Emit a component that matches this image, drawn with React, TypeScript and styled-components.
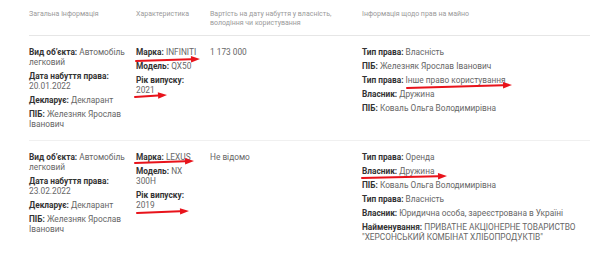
import styled, { createGlobalStyle } from 'styled-components';

const Global = createGlobalStyle`
  html, body { margin: 0; padding: 0; background: #fff; }
  body { font-family: Roboto, "Liberation Sans", sans-serif; }
`;

const Page = styled.div`
  position: relative;
  width: 600px;
  height: 257px;
  overflow: hidden;
  padding: 10px 10px 0 29px;
  box-sizing: border-box;
`;

const Grid = styled.div`
  display: grid;
  grid-template-columns: 107px 74px 152px 228px;
`;

const Head = styled.div`
  font-size: 7px;
  line-height: 9px;
  color: #9a9a9a;
  padding: 0 12px 7px 0;
  border-bottom: 1px solid #e6e6e6;
`;

const Cell = styled.div<{ $last?: boolean; $wide?: boolean }>`
  padding: 11px ${(p) => (p.$wide ? '0' : '8px')} 7px 0;
  border-bottom: ${(p) => (p.$last ? 'none' : '1px solid #f0f0f0')};
`;

const Item = styled.div`
  font-size: 8.3px;
  line-height: 10px;
  color: #666;
  margin-bottom: 4px;
  b { color: #333; font-weight: 700; }
`;

const Overlay = styled.svg`
  position: absolute;
  left: 0;
  top: 0;
  pointer-events: none;
`;

type Field = [string, string];

const rows: { general: Field[]; spec: Field[]; price: string; rights: Field[] }[] = [
  {
    general: [
      ['Вид об\u2019єкта', 'Автомобіль легковий'],
      ['Дата набуття права', '20.01.2022'],
      ['Декларує', 'Декларант'],
      ['ПІБ', 'Железняк Ярослав Іванович'],
    ],
    spec: [
      ['Марка', 'INFINITI'],
      ['Модель', 'QX50'],
      ['Рік випуску', '2021'],
    ],
    price: '1 173 000',
    rights: [
      ['Тип права', 'Власність'],
      ['ПІБ', 'Железняк Ярослав Іванович'],
      ['Тип права', 'Інше право користування'],
      ['Власник', 'Дружина'],
      ['ПІБ', 'Коваль Ольга Володимирівна'],
    ],
  },
  {
    general: [
      ['Вид об\u2019єкта', 'Автомобіль легковий'],
      ['Дата набуття права', '23.02.2022'],
      ['Декларує', 'Декларант'],
      ['ПІБ', 'Железняк Ярослав Іванович'],
    ],
    spec: [
      ['Марка', 'LEXUS'],
      ['Модель', 'NX 300H'],
      ['Рік випуску', '2019'],
    ],
    price: 'Не відомо',
    rights: [
      ['Тип права', 'Оренда'],
      ['Власник', 'Дружина'],
      ['ПІБ', 'Коваль Ольга Володимирівна'],
      ['Тип права', 'Власність'],
      ['Власник', 'Юридична особа, зареєстрована в Україні'],
      ['Найменування', 'ПРИВАТНЕ АКЦІОНЕРНЕ ТОВАРИСТВО "ХЕРСОНСЬКИЙ КОМБІНАТ ХЛІБОПРОДУКТІВ"'],
    ],
  },
];

const Fields = ({ list }: { list: Field[] }) => (
  <>
    {list.map(([k, v], i) => (
      <Item key={i}>
        <b>{k}:</b> {v}
      </Item>
    ))}
  </>
);

// red marker arrows drawn over the screenshot
const arrows = [
  [136, 61, 200, 59],
  [135, 97, 167, 95],
  [407, 88, 512, 85],
  [135, 163, 194, 161],
  [137, 213, 189, 211],
  [362, 178, 447, 176],
];

const Arrow = ({ a }: { a: number[] }) => {
  const [x1, y1, x2, y2] = a;
  const ang = Math.atan2(y2 - y1, x2 - x1);
  const len = 9;
  const w = 3.2;
  const bx = x2 - Math.cos(ang) * len;
  const by = y2 - Math.sin(ang) * len;
  const nx = -Math.sin(ang) * w;
  const ny = Math.cos(ang) * w;
  return (
    <g>
      <line x1={x1} y1={y1} x2={bx} y2={by} stroke="#e8131b" strokeWidth={2} strokeLinecap="round" />
      <polygon points={`${x2},${y2} ${bx + nx},${by + ny} ${bx - nx},${by - ny}`} fill="#e8131b" />
    </g>
  );
};

export default function App() {
  return (
    <Page>
      <Global />
      <Grid>
        <Head>Загальна інформація</Head>
        <Head>Характеристика</Head>
        <Head>Вартість на дату набуття у власність, володіння чи користування</Head>
        <Head>Інформація щодо прав на майно</Head>
        {rows.map((r, i) => {
          const last = i === rows.length - 1;
          return [
            <Cell key={`g${i}`} $last={last}>
              <Fields list={r.general} />
            </Cell>,
            <Cell key={`s${i}`} $last={last}>
              <Fields list={r.spec} />
            </Cell>,
            <Cell key={`p${i}`} $last={last}>
              <Item>{r.price}</Item>
            </Cell>,
            <Cell key={`r${i}`} $last={last} $wide>
              <Fields list={r.rights} />
            </Cell>,
          ];
        })}
      </Grid>
      <Overlay width={600} height={257} viewBox="0 0 600 257">
        {arrows.map((a, i) => (
          <Arrow key={i} a={a} />
        ))}
      </Overlay>
    </Page>
  );
}
